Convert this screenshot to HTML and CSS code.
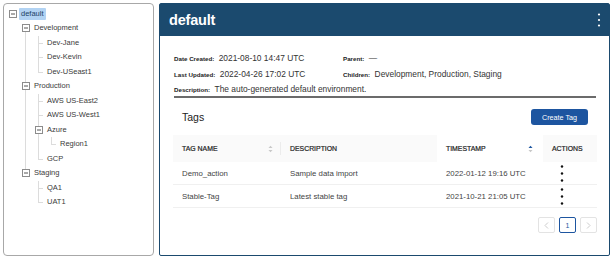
FILE: index.html
```html
<!DOCTYPE html>
<html>
<head>
    <title>Environments</title>
    <link rel="stylesheet" href="styles.css">
</head>
<body>
    <div class="layout">
        <div class="tree-panel">
            <ul class="tree">
                <li class="branch">
                    <div class="row">
                        <span class="switch"><svg width="8" height="8" viewBox="0 0 8 8"><rect x=".5" y=".5" width="7" height="7" fill="#fff" stroke="#8c8c8c"/><path d="M2 4h4" stroke="#555"/></svg></span>
                        <span class="title selected">default</span>
                    </div>
                    <ul>
                        <li class="branch">
                            <div class="row">
                                <span class="switch"><svg width="8" height="8" viewBox="0 0 8 8"><rect x=".5" y=".5" width="7" height="7" fill="#fff" stroke="#8c8c8c"/><path d="M2 4h4" stroke="#555"/></svg></span>
                                <span class="title">Development</span>
                            </div>
                            <ul>
                                <li class="leaf"><div class="row"><span class="switch"></span><span class="title">Dev-Jane</span></div></li>
                                <li class="leaf"><div class="row"><span class="switch"></span><span class="title">Dev-Kevin</span></div></li>
                                <li class="leaf"><div class="row"><span class="switch"></span><span class="title">Dev-USeast1</span></div></li>
                            </ul>
                        </li>
                        <li class="branch">
                            <div class="row">
                                <span class="switch"><svg width="8" height="8" viewBox="0 0 8 8"><rect x=".5" y=".5" width="7" height="7" fill="#fff" stroke="#8c8c8c"/><path d="M2 4h4" stroke="#555"/></svg></span>
                                <span class="title">Production</span>
                            </div>
                            <ul>
                                <li class="leaf"><div class="row"><span class="switch"></span><span class="title">AWS US-East2</span></div></li>
                                <li class="leaf"><div class="row"><span class="switch"></span><span class="title">AWS US-West1</span></div></li>
                                <li class="branch">
                                    <div class="row">
                                        <span class="switch"><svg width="8" height="8" viewBox="0 0 8 8"><rect x=".5" y=".5" width="7" height="7" fill="#fff" stroke="#8c8c8c"/><path d="M2 4h4" stroke="#555"/></svg></span>
                                        <span class="title">Azure</span>
                                    </div>
                                    <ul>
                                        <li class="leaf"><div class="row"><span class="switch"></span><span class="title">Region1</span></div></li>
                                    </ul>
                                </li>
                                <li class="leaf"><div class="row"><span class="switch"></span><span class="title">GCP</span></div></li>
                            </ul>
                        </li>
                        <li class="branch">
                            <div class="row">
                                <span class="switch"><svg width="8" height="8" viewBox="0 0 8 8"><rect x=".5" y=".5" width="7" height="7" fill="#fff" stroke="#8c8c8c"/><path d="M2 4h4" stroke="#555"/></svg></span>
                                <span class="title">Staging</span>
                            </div>
                            <ul>
                                <li class="leaf"><div class="row"><span class="switch"></span><span class="title">QA1</span></div></li>
                                <li class="leaf"><div class="row"><span class="switch"></span><span class="title">UAT1</span></div></li>
                            </ul>
                        </li>
                    </ul>
                </li>
            </ul>
        </div>

        <div class="main-panel">
            <div class="main-head">
                <h1>default</h1>
                <svg class="kebab-light" width="4" height="14" viewBox="0 0 4 14"><circle cx="2" cy="1.5" r="1.1" fill="#fff"/><circle cx="2" cy="7" r="1.1" fill="#fff"/><circle cx="2" cy="12.5" r="1.1" fill="#fff"/></svg>
            </div>

            <div class="details">
                <div class="detail"><span class="label">Date Created:</span> <span class="value">2021-08-10 14:47 UTC</span></div>
                <div class="detail"><span class="label">Parent:</span> <span class="value">—</span></div>
                <div class="detail"><span class="label">Last Updated:</span> <span class="value">2022-04-26 17:02 UTC</span></div>
                <div class="detail"><span class="label">Children:</span> <span class="value">Development, Production, Staging</span></div>
                <div class="detail wide"><span class="label">Description:</span> <span class="value">The auto-generated default environment.</span></div>
            </div>
            <div class="divider"></div>

            <div class="tags">
                <div class="tags-head">
                    <h2>Tags</h2>
                    <button class="btn-primary">Create Tag</button>
                </div>
                <table class="tag-table">
                    <thead>
                        <tr>
                            <th class="col-name">
                                <div class="th-inner">TAG NAME
                                    <svg class="sorter" width="5" height="8" viewBox="0 0 5 8"><path d="M0.5 3L2.5 0.8L4.5 3Z" fill="#c8c8c8"/><path d="M0.5 5L2.5 7.2L4.5 5Z" fill="#c8c8c8"/></svg>
                                </div>
                            </th>
                            <th class="col-desc">DESCRIPTION</th>
                            <th class="col-time sorted">
                                <div class="th-inner">TIMESTAMP
                                    <svg class="sorter" width="5" height="8" viewBox="0 0 5 8"><path d="M0.5 3L2.5 0.8L4.5 3Z" fill="#1d55a0"/><path d="M0.5 5L2.5 7.2L4.5 5Z" fill="#c8c8c8"/></svg>
                                </div>
                            </th>
                            <th class="col-actions">ACTIONS</th>
                        </tr>
                    </thead>
                    <tbody>
                        <tr>
                            <td>Demo_action</td>
                            <td>Sample data import</td>
                            <td>2022-01-12 19:16 UTC</td>
                            <td><svg class="kebab" width="4" height="17" viewBox="0 0 4 17"><circle cx="2" cy="1.5" r="1.2" fill="#111"/><circle cx="2" cy="8.5" r="1.2" fill="#111"/><circle cx="2" cy="15.5" r="1.2" fill="#111"/></svg></td>
                        </tr>
                        <tr>
                            <td>Stable-Tag</td>
                            <td>Latest stable tag</td>
                            <td>2021-10-21 21:05 UTC</td>
                            <td><svg class="kebab" width="4" height="17" viewBox="0 0 4 17"><circle cx="2" cy="1.5" r="1.2" fill="#111"/><circle cx="2" cy="8.5" r="1.2" fill="#111"/><circle cx="2" cy="15.5" r="1.2" fill="#111"/></svg></td>
                        </tr>
                    </tbody>
                </table>
                <div class="pager">
                    <span class="page disabled"><svg width="5" height="7" viewBox="0 0 5 7"><path d="M4 0.5L1 3.5L4 6.5" fill="none" stroke="#ccc"/></svg></span>
                    <span class="page active">1</span>
                    <span class="page disabled"><svg width="5" height="7" viewBox="0 0 5 7"><path d="M1 0.5L4 3.5L1 6.5" fill="none" stroke="#ccc"/></svg></span>
                </div>
            </div>
        </div>
    </div>
</body>
</html>
```

FILE: styles.css
```css
body {
    margin: 0;
    font-family: "Liberation Sans", Arial, sans-serif;
    background-color: #fff;
    color: #333;
}
.layout {
    display: flex;
    gap: 5px;
    padding: 3px 4px 5px 3px;
    height: 261px;
    box-sizing: border-box;
}
.tree-panel {
    width: 151px;
    flex-shrink: 0;
    border: 1px solid #a8a8a8;
    border-radius: 4px;
    padding: 2.5px 4px;
    box-sizing: border-box;
}
.tree, .tree ul {
    list-style: none;
    margin: 0;
    padding: 0;
}
.tree ul {
    padding-left: 13px;
}
.tree ul li {
    position: relative;
}
.tree ul li::before {
    content: "";
    position: absolute;
    left: 4px;
    top: 0;
    bottom: 0;
    border-left: 1px solid #dcdcdc;
}
.tree ul li.branch:first-child::before {
    top: 7px;
}
.tree ul li:last-child::before {
    bottom: auto;
    height: 7px;
}
.tree ul li.leaf::after {
    content: "";
    position: absolute;
    left: 4px;
    top: 7px;
    width: 5px;
    border-top: 1px solid #dcdcdc;
}
.row {
    display: flex;
    align-items: center;
    height: 14.5px;
}
.switch {
    width: 11px;
    flex-shrink: 0;
    display: flex;
    align-items: center;
    padding-left: 1px;
    box-sizing: border-box;
    position: relative;
    z-index: 1;
}
.switch svg {
    display: block;
}
.title {
    font-size: 7.5px;
    line-height: 12px;
    padding: 0 2px;
    color: #3a3a3a;
    border-radius: 1px;
    white-space: nowrap;
}
.title.selected {
    background-color: #b2d3f3;
    color: #1d3f66;
    padding: 0 2px;
}
.main-panel {
    flex: 1;
    min-width: 0;
    border: 1px solid #1b4a6e;
    border-radius: 2px;
    display: flex;
    flex-direction: column;
}
.main-head {
    background-color: #1b4a6e;
    height: 32px;
    display: flex;
    align-items: center;
    justify-content: space-between;
    padding: 0 8px 0 9px;
}
.main-head h1 {
    margin: 0;
    color: #fff;
    font-size: 14.5px;
    letter-spacing: -0.2px;
    font-weight: bold;
}
.details {
    display: grid;
    grid-template-columns: 169px 1fr;
    row-gap: 4px;
    padding: 14px 13px 0 14px;
}
.detail {
    height: 12px;
    line-height: 12px;
    white-space: nowrap;
}
.detail.wide {
    grid-column: 1 / 3;
    margin-top: -1px;
}
.label {
    font-size: 6.2px;
    font-weight: bold;
    color: #222;
}
.value {
    font-size: 8.4px;
    color: #333;
}
.divider {
    margin: 3px 13px 0 14px;
    height: 2px;
    background-color: #6b6b6b;
}
.tags {
    padding: 0 12px 0 13px;
}
.tags-head {
    display: flex;
    align-items: center;
    justify-content: space-between;
    margin-top: 11px;
    padding: 0 9px;
    height: 16px;
}
.tags-head h2 {
    margin: 0;
    font-size: 10.5px;
    font-weight: normal;
    color: #222;
}
.btn-primary {
    background-color: #1d55a0;
    color: #fff;
    border: none;
    border-radius: 3px;
    font-family: inherit;
    font-size: 7.2px;
    width: 57px;
    height: 16px;
    padding: 0;
}
.tag-table {
    width: 100%;
    margin-top: 10px;
    border-collapse: collapse;
    table-layout: fixed;
}
.tag-table th {
    box-sizing: border-box;
    background-color: #fafafa;
    height: 27px;
    text-align: left;
    font-size: 6.9px;
    font-weight: normal;
    color: #222;
    padding: 0 9px;
    -webkit-text-stroke: 0.2px #222;
}
.tag-table th.sorted {
    background-color: #fff;
}
.col-name { width: 108px; }
.col-desc { width: 156px; }
.col-time { width: 106px; }
.col-actions { width: 54px; }
.th-inner {
    display: flex;
    align-items: center;
    justify-content: space-between;
}
.col-name .th-inner {
    border-right: 1px solid #ececec;
    margin-right: -9px;
    padding-right: 7px;
    height: 13px;
}
.col-time .th-inner {
    padding-right: 1px;
}
.tag-table td {
    font-size: 7.8px;
    color: #444;
    padding: 0 9px;
    height: 22px;
    border-bottom: 1px solid #f0f0f0;
}
.tag-table td:last-child {
    padding-left: 17px;
}
.kebab {
    display: block;
}
.pager {
    display: flex;
    justify-content: flex-end;
    gap: 4px;
    margin-top: 9px;
}
.page {
    width: 17px;
    height: 16px;
    border: 1px solid #e3e3e3;
    border-radius: 2px;
    box-sizing: border-box;
    display: flex;
    align-items: center;
    justify-content: center;
    font-size: 7px;
}
.page.active {
    border-color: #1d55a0;
    color: #1d55a0;
}
```
